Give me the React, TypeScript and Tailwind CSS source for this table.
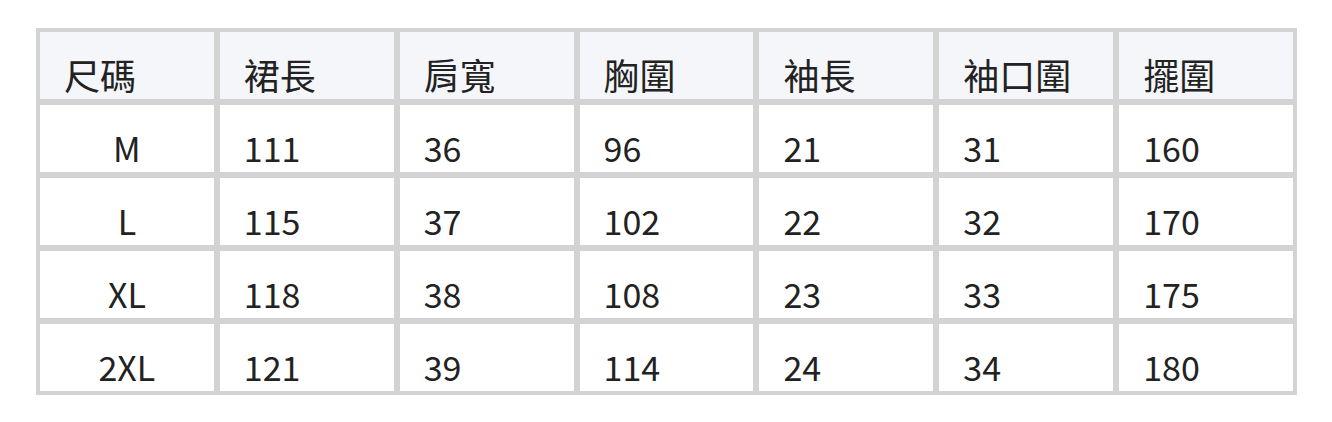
const headers = ["尺碼", "裙長", "肩寬", "胸圍", "袖長", "袖口圍", "擺圍"];

const rows = [
  ["M", "111", "36", "96", "21", "31", "160"],
  ["L", "115", "37", "102", "22", "32", "170"],
  ["XL", "118", "38", "108", "23", "33", "175"],
  ["2XL", "121", "39", "114", "24", "34", "180"],
];

export default function App() {
  return (
    <div className="h-[422px] w-[1332px] bg-white pl-[36px] pt-[28px]">
      <div
        className="grid w-[1261px] grid-cols-7 grid-rows-5 gap-[6px] bg-[#d3d3d3] p-[4px] text-[34px] text-[#222]"
        style={{ fontFamily: '"Noto Sans CJK TC", "Noto Sans", sans-serif' }}
      >
        {headers.map((h) => (
          <div key={h} className="flex h-[67px] items-end bg-[#f5f6fa] pl-[24px] text-[36px] leading-[50px]">
            {h}
          </div>
        ))}
        {rows.map((r) =>
          r.map((v, i) => (
            <div
              key={r[0] + i}
              className={
                i === 0
                  ? "flex h-[67px] items-end justify-center bg-white leading-[48px]"
                  : "flex h-[67px] items-end bg-white pl-[24px] leading-[48px]"
              }
            >
              {v}
            </div>
          ))
        )}
      </div>
    </div>
  );
}
